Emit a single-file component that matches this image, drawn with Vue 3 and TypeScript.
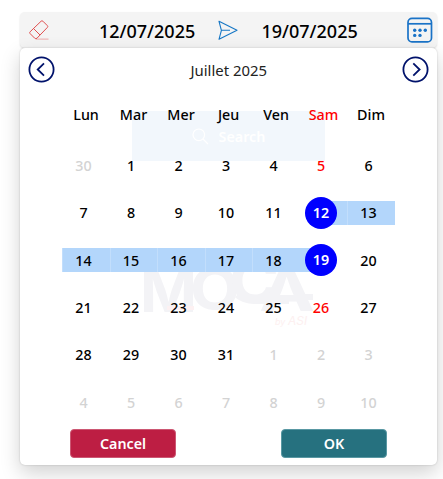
<script setup lang="ts">
interface Day {
  n: number
  muted: boolean
  saturday: boolean
  edge: boolean
  range: '' | 'range' | 'range-start' | 'range-end'
}

const weekdays: string[] = ['Lun', 'Mar', 'Mer', 'Jeu', 'Ven', 'Sam', 'Dim']
const start = 12
const end = 19

const days: Day[] = Array.from({ length: 42 }, (_, i) => {
  const current = i >= 1 && i <= 31
  const n = i === 0 ? 30 : current ? i : i - 31
  let range: Day['range'] = ''
  if (current && n === start) range = 'range-start'
  else if (current && n === end) range = 'range-end'
  else if (current && n > start && n < end) range = 'range'
  return {
    n,
    muted: !current,
    saturday: current && i % 7 === 5,
    edge: current && (n === start || n === end),
    range,
  }
})
</script>

<template>
  <main class="page">
    <header class="bar">
      <svg class="eraser" width="22" height="22" viewBox="0 0 22 22" fill="none" stroke="#e05050">
        <path d="M2.1 12.8 13.1 2.2Q14 1.3 14.9 2.2L19.4 6.7Q20.2 7.5 19.4 8.4L9 19.2Q7.8 20.2 6.7 19.2L2.1 14.6Q1.2 13.7 2.1 12.8ZM5.5 9.5 12 16" />
        <path d="M8 20.1H20.5" opacity=".45" />
      </svg>
      <span class="date">12/07/2025</span>
      <svg class="send" width="21" height="22" viewBox="0 0 21 22" fill="none" stroke="#1677c5" stroke-width="1.1" stroke-linejoin="round">
        <path d="M1 2.3 19 11.3 1 20.3 3.4 11.3ZM3.4 11.3H12" />
      </svg>
      <span class="date">19/07/2025</span>
      <svg class="calendar-icon" width="26" height="26" viewBox="0 0 26 26" fill="none" stroke="#1a73c7" stroke-width="1.7">
        <rect x="1" y="1.4" width="23.5" height="23.5" rx="4" />
        <path d="M1 6.8H24.5" />
        <g fill="#1a73c7" stroke="none">
          <circle cx="7.7" cy="13.2" r="1.7" /><circle cx="13" cy="13.2" r="1.7" /><circle cx="18.3" cy="13.2" r="1.7" />
          <circle cx="7.7" cy="18.4" r="1.7" /><circle cx="13" cy="18.4" r="1.7" />
        </g>
      </svg>
    </header>

    <section class="card">
      <div class="backdrop">
        <div class="search">
          <svg width="17" height="17" viewBox="0 0 17 17" fill="none" stroke="#fff" stroke-width="1.2">
            <circle cx="6.8" cy="6.8" r="5.8" /><path d="m11 11 5 5" />
          </svg>
          <span>Search</span>
        </div>
        <svg class="brand" width="190" height="80" viewBox="0 0 190 80">
          <g class="brand-name">
            <text x="-1" y="48" textLength="57" lengthAdjust="spacingAndGlyphs">M</text>
            <text x="49" y="45" textLength="50" lengthAdjust="spacingAndGlyphs">O</text>
            <text x="88" y="37" textLength="50" lengthAdjust="spacingAndGlyphs">C</text>
            <text x="118" y="47" textLength="56" lengthAdjust="spacingAndGlyphs">A</text>
          </g>
          <path d="M96 31Q103 37 113 37H148M155 33H172" fill="none" stroke="#f3f3f6" stroke-width="6" />
          <path d="M26 44H53" stroke="#fdf1f2" stroke-width="4" />
          <text class="brand-by" x="134" y="61">by <tspan class="brand-asi">ASI</tspan></text>
        </svg>
      </div>

      <div class="month">
        <svg width="27" height="27" viewBox="0 0 27 27" fill="none" stroke="#00126b" stroke-width="1.8">
          <circle cx="13.5" cy="13.5" r="12.1" /><path d="m16 7.3-6.3 6.2 6.3 6.2" />
        </svg>
        <span>Juillet 2025</span>
        <svg width="27" height="27" viewBox="0 0 27 27" fill="none" stroke="#00126b" stroke-width="1.8">
          <circle cx="13.5" cy="13.5" r="12.1" /><path d="m11.3 7.3 6.3 6.2-6.3 6.2" />
        </svg>
      </div>

      <div class="weekdays">
        <span v-for="d in weekdays" :key="d" :class="{ saturday: d === 'Sam' }">{{ d }}</span>
      </div>
      <div class="days">
        <div v-for="(d, i) in days" :key="i" class="day" :class="[d.range, { muted: d.muted, saturday: d.saturday }]">
          <span :class="{ edge: d.edge }">{{ d.n }}</span>
        </div>
      </div>

      <footer class="actions">
        <button class="cancel" type="button">Cancel</button>
        <button class="ok" type="button">OK</button>
      </footer>
    </section>
  </main>
</template>

<style>
body {
  background: #fff;
  overflow: hidden;
}
</style>

<style scoped>
.page {
  box-sizing: border-box;
  width: 443px;
  height: 479px;
  padding: 12px 6px 0 20px;
  overflow: hidden;
  font-family: "Noto Sans", "Open Sans", sans-serif;
  font-size: 14.3px;
  font-weight: 500;
  color: #000;
}
.bar {
  box-sizing: border-box;
  display: flex;
  align-items: center;
  height: 36px;
  padding: 0 4px 0 8px;
  background: #f4f4f4;
  border-radius: 5px;
  box-shadow: 0 1px 2px #0002;
}
.date {
  width: 97px;
  padding-top: 2px;
  font-size: 18px;
  line-height: 34px;
  font-weight: 500;
  white-space: nowrap;
}
.eraser {
  margin-right: 49px;
}
.send {
  margin: 0 22.5px 0 22px;
}
.calendar-icon {
  margin-left: auto;
}
.card {
  position: relative;
  box-sizing: border-box;
  height: 416.5px;
  background: #fff;
  border-radius: 5px;
  box-shadow: 0 0 2px #0003, 0 8px 20px #0000002e;
}
.backdrop {
  position: absolute;
  inset: 0;
}
.search {
  position: absolute;
  left: 112px;
  top: 63px;
  width: 193px;
  height: 50px;
  display: flex;
  align-items: center;
  justify-content: center;
  gap: 10px;
  background: #f2f7fc;
  color: #fff;
  font-weight: 600;
}
.brand {
  position: absolute;
  left: 121px;
  top: 216px;
}
.brand-name {
  fill: #f3f3f6;
  font: 700 56px Inter, sans-serif;
}
.brand-by {
  fill: #fdf0f0;
  font: italic 400 9px Inter, sans-serif;
}
.brand-asi {
  font-size: 12px;
}
.month {
  position: relative;
  display: flex;
  align-items: center;
  justify-content: space-between;
  height: 27px;
  padding: 8px 7.5px 0 8px;
  color: #222;
}
.month span {
  font-size: 14.9px;
  font-weight: 450;
  line-height: 20px;
}
.weekdays,
.days {
  position: relative;
  display: grid;
  grid-template-columns: repeat(7, 47.5px);
  width: 332.5px;
  margin-left: 42.3px;
}
.weekdays {
  height: 24px;
  margin-top: 20px;
  line-height: 24px;
  text-align: center;
}
.days {
  grid-auto-rows: 47.4px;
  margin-top: 14.6px;
}
.day {
  box-sizing: border-box;
  display: flex;
  align-items: center;
  justify-content: center;
  height: 24px;
  margin: 11.7px 0;
  padding-right: 5px;
}
.day span {
  padding-top: 1px;
  line-height: 24px;
}
.range {
  background: #b3d6fb;
  box-shadow: inset 1px 0 #c2defc;
}
.range-start {
  background: linear-gradient(90deg, transparent 50%, #b3d6fb 50%);
}
.range-end {
  background: linear-gradient(90deg, #b3d6fb 50%, transparent 50%);
}
.day .edge {
  flex: none;
  width: 32px;
  height: 32px;
  padding: 0;
  line-height: 32px;
  text-align: center;
  border-radius: 50%;
  background: #00f;
  color: #fff;
  font-weight: 600;
}
.saturday {
  color: #f00;
}
.muted {
  color: #d3d3d3;
}
.actions {
  position: relative;
  display: flex;
  justify-content: space-between;
  padding: 3px 50px 0;
}
button {
  box-sizing: border-box;
  width: 106px;
  height: 29px;
  padding: 0;
  border: 1px solid;
  border-radius: 4px;
  color: #fff;
  font: 600 14.3px/27px "Noto Sans", "Open Sans", sans-serif;
}
.cancel {
  background: #bd1e43;
  border-color: #cc5773;
}
.ok {
  background: #26717f;
  border-color: #5998a3;
}
</style>
